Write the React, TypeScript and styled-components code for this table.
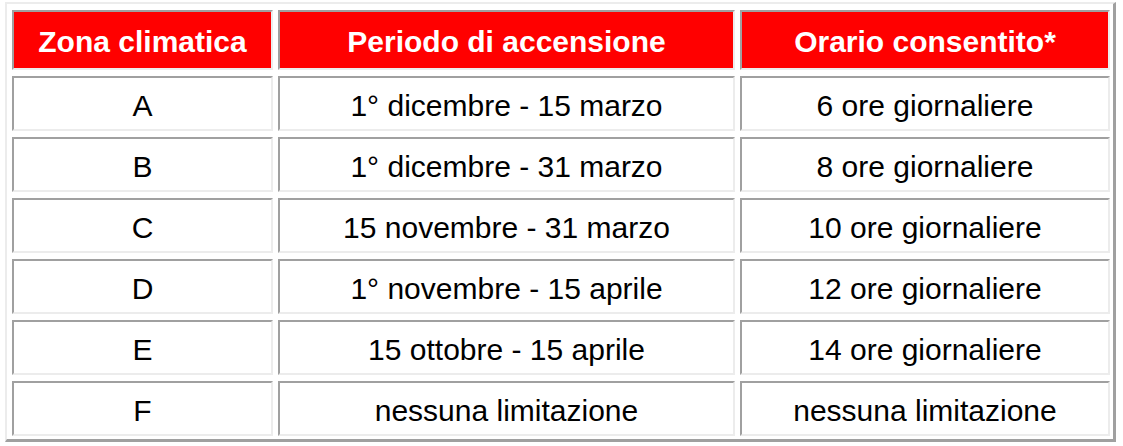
import styled, { createGlobalStyle } from "styled-components";

const GlobalStyle = createGlobalStyle`
  html, body {
    margin: 0;
    padding: 0;
    background: #ffffff;
  }
  body {
    font-family: "Liberation Sans", Arial, sans-serif;
  }
`;

const LIGHT = "#ececec";
const DARK = "#a0a0a0";

const rows = [
  ["A", "1° dicembre - 15 marzo", "6 ore giornaliere"],
  ["B", "1° dicembre - 31 marzo", "8 ore giornaliere"],
  ["C", "15 novembre - 31 marzo", "10 ore giornaliere"],
  ["D", "1° novembre - 15 aprile", "12 ore giornaliere"],
  ["E", "15 ottobre - 15 aprile", "14 ore giornaliere"],
  ["F", "nessuna limitazione", "nessuna limitazione"],
];

const headers = ["Zona climatica", "Periodo di accensione", "Orario consentito*"];

const Table = styled.div`
  display: grid;
  grid-template-columns: 261px 457px 370px;
  grid-template-rows: 60px repeat(6, 55px);
  gap: 6px 5px;
  width: max-content;
  margin: 2px 0 0 5px;
  padding: 6px 3px 3px 5px;
  border-style: solid;
  border-width: 2px 3px 3px 2px;
  border-color: ${LIGHT} ${DARK} ${DARK} ${LIGHT};
`;

const Cell = styled.div<{ $head?: boolean }>`
  box-sizing: border-box;
  display: flex;
  align-items: center;
  justify-content: center;
  padding-top: ${({ $head }) => ($head ? "3px" : "4px")};
  border-style: solid;
  border-width: 2px;
  border-color: ${DARK} ${LIGHT} ${LIGHT} ${DARK};
  background: ${({ $head }) => ($head ? "#ff0000" : "#ffffff")};
  color: ${({ $head }) => ($head ? "#ffffff" : "#000000")};
  font-size: 30px;
  font-weight: ${({ $head }) => ($head ? 700 : 400)};
  white-space: nowrap;
`;

export default function App() {
  return (
    <>
      <GlobalStyle />
      <Table role="table">
        {headers.map((h) => (
          <Cell key={h} $head role="columnheader">
            {h}
          </Cell>
        ))}
        {rows.map((r) =>
          r.map((c, i) => (
            <Cell key={r[0] + i} role="cell">
              {c}
            </Cell>
          ))
        )}
      </Table>
    </>
  );
}
